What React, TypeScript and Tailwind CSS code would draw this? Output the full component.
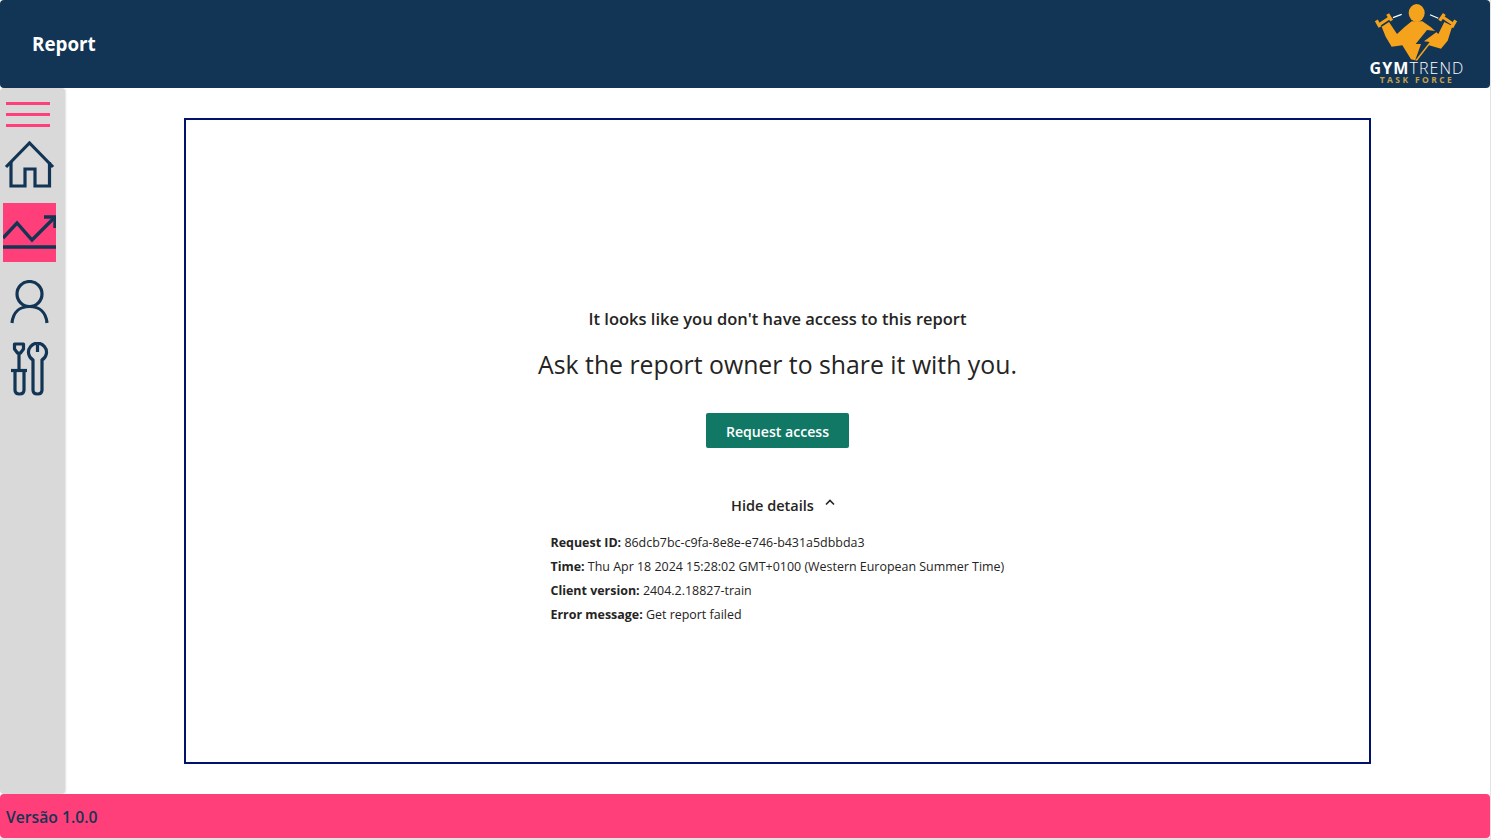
const NAVY = '#133555';

function GymLogo() {
  return (
    <div className="flex flex-col items-center w-[98px] mr-[24px] self-start pt-[2px]">
      <svg width="96" height="62" viewBox="0 0 288 186">
        <ellipse cx="143" cy="33" rx="24" ry="27" fill="#f5a31c" />
        <path d="M38 74 L60 60 L84 96 L106 76 L128 58 H160 L186 76 L208 96 L226 60 L250 72 L236 116 L216 140 L180 130 L144 176 L126 172 L100 130 L68 134 L50 104 Z" fill="#f5a31c" />
        <path d="M174 84 L140 126 L156 126 L138 176 L182 120 L165 118 L206 88 Z" fill={NAVY} />
        <path d="M30 68 L64 46 M222 46 L252 66" stroke="#f5a31c" strokeWidth="9" />
        <path d="M22 55 L33 75 M56 36 L68 56 M226 36 L212 56 M260 55 L248 76" stroke="#f5a31c" strokeWidth="10" />
        <path d="M72 47 L98 37 M183 38 L208 49" stroke="#ffffff" strokeWidth="3.5" />
      </svg>
      <div className="mt-[-2px] h-[13px] text-[16px] leading-[13px] tracking-[1.1px] text-white whitespace-nowrap">
        <span className="font-bold">GYM</span>
        <span className="font-light">TREND</span>
      </div>
      <div className="h-[9px] text-[8.5px] leading-[9px] tracking-[2.4px] font-bold text-[#c9a04a] whitespace-nowrap">
        TASK FORCE
      </div>
    </div>
  );
}

function SideNav() {
  return (
    <aside className="w-[65px] shrink-0 bg-[#d9d9d9] rounded-[4px] shadow-[1px_0_2px_rgba(0,0,0,0.12)] flex flex-col">
      <div className="mt-[14px] ml-[6px] w-[44px] flex flex-col gap-[8.5px]">
        <div className="h-[2.5px] bg-[#ff3f79]" />
        <div className="h-[2.5px] bg-[#ff3f79]" />
        <div className="h-[2.5px] bg-[#ff3f79]" />
      </div>
      {/* home */}
      <svg className="mt-[14px] ml-[4px]" width="52" height="48" viewBox="0 0 52 48" fill="none" stroke={NAVY} strokeWidth="3.2">
        <path d="M2 26 L25.5 2 L49 26" />
        <path d="M7 21 V45 H21 V28 H31 V45 H45.5 V21" />
      </svg>
      {/* chart, current page */}
      <div className="mt-[14px] ml-[3px] w-[53px] h-[59px] bg-[#ff3f79]">
        <svg width="53" height="59" viewBox="0 0 53 59" fill="none" stroke={NAVY} strokeWidth="3.4">
          <path d="M0 35 L14 20 L29 37 L51 15" />
          <path d="M41 14 H52 V25" />
          <path d="M0 44 H53" />
        </svg>
      </div>
      {/* user */}
      <svg className="mt-[18px] ml-[10px]" width="40" height="44" viewBox="0 0 40 44" fill="none" stroke={NAVY} strokeWidth="3.2">
        <circle cx="19.5" cy="14" r="12.5" />
        <path d="M2 43 C3 32 10 26.5 19.5 26.5 C29 26.5 36 32 37 43" />
      </svg>
      {/* tools */}
      <svg className="mt-[18px] ml-[10px]" width="40" height="54" viewBox="0 0 40 54" fill="none" stroke={NAVY} strokeWidth="3.2" strokeLinejoin="round">
        <path d="M4.5 2 H13.5 V7 L10.5 11 H7.5 L4.5 7 Z" />
        <path d="M9 11 V29" />
        <path d="M1 28.5 H17" />
        <path d="M5 29 V48 Q5 52 9.5 52 Q14 52 14 48 V29" />
        <path d="M23 18 A9 9 0 1 1 32 18 V48 Q32 52 27.5 52 Q23 52 23 48 Z" />
        <path d="M27.5 3 V10" />
      </svg>
    </aside>
  );
}

function ErrorDetails() {
  const rows = [
    ['Request ID:', '86dcb7bc-c9fa-8e8e-e746-b431a5dbbda3'],
    ['Time:', 'Thu Apr 18 2024 15:28:02 GMT+0100 (Western European Summer Time)'],
    ['Client version:', '2404.2.18827-train'],
    ['Error message:', 'Get report failed'],
  ];
  return (
    <div className="mt-[15px] w-[454px] text-[12.45px] leading-[24px] text-[#252423]">
      {rows.map(([k, v]) => (
        <div key={k} className="whitespace-nowrap">
          <b className="font-bold">{k}</b> {v}
        </div>
      ))}
    </div>
  );
}

export default function App() {
  return (
    <div className="w-[1491px] h-[840px] bg-[#e3e3e3] overflow-hidden font-['Open_Sans',sans-serif]">
      <div className="w-[1490px] h-[838px] bg-white flex flex-col">
        <header className="h-[88px] shrink-0 bg-[#133555] rounded-[4px] flex items-center justify-between">
          <h1 className="ml-[32px] text-[18.8px] font-bold text-white">Report</h1>
          <GymLogo />
        </header>
        <div className="flex-1 flex min-h-0">
          <SideNav />
          <main className="flex-1 min-w-0 pl-[119px] pt-[30px]">
            <div className="w-[1187px] h-[646px] border-2 border-[#00126b] flex flex-col items-center pt-[188px] text-[#252423]">
              <p className="text-[16.5px] leading-[22px] font-semibold">It looks like you don't have access to this report</p>
              <p className="mt-[20px] text-[24.8px] leading-[28px]">Ask the report owner to share it with you.</p>
              <button className="mt-[35px] w-[143px] h-[35px] pt-[2px] bg-[#117865] rounded-[2px] text-[14.1px] font-semibold text-white">
                Request access
              </button>
              <div className="mt-[48px] ml-[12px] flex items-center gap-[10px] text-[14.5px] leading-[20px] font-semibold">
                Hide details
                <svg width="12" height="12" viewBox="0 0 12 12" fill="none" stroke="#252423" strokeWidth="1.6" className="mt-[-6px]">
                  <path d="M2 7.5 L6 3.5 L10 7.5" />
                </svg>
              </div>
              <ErrorDetails />
            </div>
          </main>
        </div>
        <footer className="h-[44px] shrink-0 bg-[#ff3f79] rounded-[4px] pl-[6px] pt-[3px] flex items-center text-[15.7px] font-semibold text-[#133555]">
          Versão 1.0.0
        </footer>
      </div>
    </div>
  );
}
